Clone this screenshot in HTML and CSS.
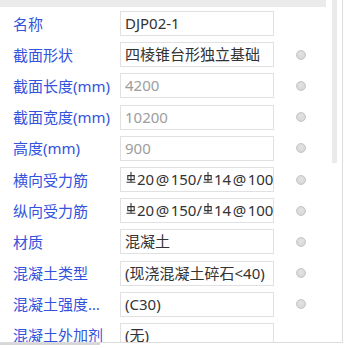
FILE: index.html
```html
<!DOCTYPE html>
<html lang="zh-CN">

<head>
  <meta charset="UTF-8" />
  <title>构件属性</title>
  <link rel="stylesheet" href="styles.css">
</head>

<body>
  <!-- 속성패널 -->
  <div class="panel">
    <div class="body">
      <!-- 잘린 표머리 -->
      <div class="head"></div>

      <ul class="props">
        <li class="row">
          <span class="label">名称</span>
          <span class="val">DJP02-1</span>
        </li>
        <li class="row">
          <span class="label">截面形状</span>
          <span class="val">四棱锥台形独立基础</span>
          <i class="dot"></i>
        </li>
        <li class="row">
          <span class="label">截面长度(mm)</span>
          <span class="val off">4200</span>
          <i class="dot"></i>
        </li>
        <li class="row">
          <span class="label">截面宽度(mm)</span>
          <span class="val off">10200</span>
          <i class="dot"></i>
        </li>
        <li class="row">
          <span class="label">高度(mm)</span>
          <span class="val off">900</span>
          <i class="dot"></i>
        </li>
        <li class="row">
          <span class="label">横向受力筋</span>
          <span class="val"><svg class="bar" viewBox="0 0 10 11" width="10" height="11"><path d="M5 0V10M1.8 3.6H8.2V7.6H1.8ZM0.5 10.2H9.5" fill="none" stroke="#333" stroke-width="1.1"/></svg>20<span class="at">@</span>150/<svg class="bar" viewBox="0 0 10 11" width="10" height="11"><path d="M5 0V10M1.8 3.6H8.2V7.6H1.8ZM0.5 10.2H9.5" fill="none" stroke="#333" stroke-width="1.1"/></svg>14<span class="at">@</span>100</span>
          <i class="dot"></i>
        </li>
        <li class="row">
          <span class="label">纵向受力筋</span>
          <span class="val"><svg class="bar" viewBox="0 0 10 11" width="10" height="11"><path d="M5 0V10M1.8 3.6H8.2V7.6H1.8ZM0.5 10.2H9.5" fill="none" stroke="#333" stroke-width="1.1"/></svg>20<span class="at">@</span>150/<svg class="bar" viewBox="0 0 10 11" width="10" height="11"><path d="M5 0V10M1.8 3.6H8.2V7.6H1.8ZM0.5 10.2H9.5" fill="none" stroke="#333" stroke-width="1.1"/></svg>14<span class="at">@</span>100</span>
          <i class="dot"></i>
        </li>
        <li class="row">
          <span class="label">材质</span>
          <span class="val">混凝土</span>
          <i class="dot"></i>
        </li>
        <li class="row">
          <span class="label">混凝土类型</span>
          <span class="val">(现浇混凝土碎石&lt;40)</span>
          <i class="dot"></i>
        </li>
        <li class="row">
          <span class="label">混凝土强度等级</span>
          <span class="val">(C30)</span>
          <i class="dot"></i>
        </li>
        <li class="row">
          <span class="label">混凝土外加剂</span>
          <span class="val">(无)</span>
        </li>
      </ul>
    </div>

    <!-- 세로 스크롤바 -->
    <div class="vscroll">
      <div class="thumb"></div>
    </div>
  </div>

  <!-- 가로 스크롤바 -->
  <div class="hscroll"></div>
</body>

</html>
```

FILE: styles.css
```css
/* 초기화 */
html,
body,
ul {
  margin: 0;
  padding: 0;
}

ul {
  list-style: none;
}

body {
  background-color: #fff;
  font-family: "Noto Sans", "Noto Sans CJK SC", sans-serif;
  font-size: 15px;
}

/* 속성패널 */
.panel {
  display: flex;
  width: 343px;
  height: 343px;
  box-sizing: border-box;
  border-right: 1px solid #dcdcdc;
  border-bottom: 1px solid #dcdcdc;
  overflow: hidden;
}

.body {
  width: 332px;
}

/* 잘린 표머리 */
.head {
  width: 326px;
  height: 7px;
  background-color: #ebebeb;
}

.props {
  padding-top: 1px;
}

/* 한줄 */
.row {
  display: flex;
  align-items: center;
  height: 31.2px;
}

.label {
  width: 100px;
  margin-left: 13px;
  margin-right: 7px;
  color: #3353dc;
  white-space: nowrap;
  overflow: hidden;
  text-overflow: ellipsis;
  line-height: 20px;
}

/* 입력칸 */
.val {
  display: block;
  width: 154px;
  height: 25px;
  box-sizing: border-box;
  padding-left: 4px;
  border: 1px solid #e1e1e1;
  color: #333;
  line-height: 22px;
  white-space: nowrap;
  overflow: hidden;
}

.val.off {
  color: #9d9d9d;
}

/* 철근기호 */
.bar {
  margin: 0 1px;
  vertical-align: 2px;
}

/* @ 글자 폭 보정 */
.at {
  margin: 0 1.5px;
}

/* 회색 동그라미 */
.dot {
  width: 10px;
  height: 10px;
  box-sizing: border-box;
  margin-left: 22px;
  border: 1px solid #c6c6c6;
  border-radius: 50%;
  background: radial-gradient(circle at 50% 40%, #e4e4e4, #d2d2d2);
}

/* 스크롤바 */
.vscroll {
  width: 10px;
}

.vscroll .thumb {
  width: 5px;
  height: 163px;
  background-color: #eaeaea;
}

.hscroll {
  width: 100px;
  height: 2px;
  background-color: #d6d6d6;
}
```
